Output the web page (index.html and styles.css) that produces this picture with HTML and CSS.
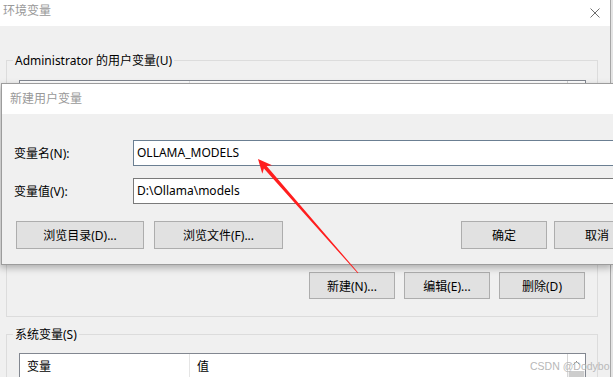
FILE: index.html
```html
<!doctype html>
<html>
	<head>
		<title>环境变量</title>
		<meta charset="utf-8" />
		<link rel="stylesheet" href="styles.css">
	</head>
	<body>
		<div class="window">
			<div class="titlebar">
				<span class="title">环境变量</span>
				<svg class="close" width="10" height="10" viewBox="0 0 10 10"><path d="M0.5 0.5L9.5 9.5M9.5 0.5L0.5 9.5" stroke="#6e6e6e" stroke-width="1" fill="none"/></svg>
			</div>
			<div class="client">
				<div class="group group-user">
					<div class="group-label">Administrator 的用户变量(U)</div>
					<div class="list list-user">
						<div class="list-main">
							<div class="list-head">
								<div class="col-name">变量</div>
								<div class="col-value">值</div>
							</div>
						</div>
						<div class="scroll"><span class="scroll-up"><svg width="7" height="4" viewBox="0 0 7 4"><path d="M0.5 3.5L3.5 0.5L6.5 3.5" stroke="#606060" fill="none"/></svg></span><span class="thumb"></span></div>
					</div>
					<div class="btn-row">
						<button class="btn">新建(N)...</button>
						<button class="btn">编辑(E)...</button>
						<button class="btn">删除(D)</button>
					</div>
				</div>
				<div class="group group-sys">
					<div class="group-label">系统变量(S)</div>
					<div class="list list-sys">
						<div class="list-main">
							<div class="list-head">
								<div class="col-name">变量</div>
								<div class="col-value">值</div>
							</div>
						</div>
						<div class="scroll"><span class="scroll-up"><svg width="7" height="4" viewBox="0 0 7 4"><path d="M0.5 3.5L3.5 0.5L6.5 3.5" stroke="#606060" fill="none"/></svg></span><span class="thumb"></span></div>
					</div>
				</div>
			</div>
		</div>

		<!-- 新建用户变量 对话框 -->
		<div class="dialog">
			<div class="dlg-title">新建用户变量</div>
			<div class="dlg-body">
				<div class="field">
					<label class="field-label">变量名(N):</label>
					<div class="input input-focus">OLLAMA_MODELS</div>
				</div>
				<div class="field field-2">
					<label class="field-label">变量值(V):</label>
					<div class="input">D:\Ollama\models</div>
				</div>
				<div class="dlg-btns">
					<button class="btn btn-dir">浏览目录(D)...</button>
					<button class="btn btn-file">浏览文件(F)...</button>
					<button class="btn btn-ok">确定</button>
					<button class="btn btn-cancel">取消</button>
				</div>
			</div>
		</div>

		<svg class="arrow" width="613" height="377" viewBox="0 0 613 377">
			<polygon points="258,159 272.1,165.2 266.6,166.1 358.3,272.7 357.7,273.3 263.9,168.5 262.3,173.8" fill="#ff1e1e"/>
		</svg>

		<div class="watermark">CSDN @Dodybo</div>
	</body>
</html>
```

FILE: styles.css
```css
*{
	margin:0;
	padding:0;
	box-sizing:border-box;
}

body{
	width:613px;
	height:377px;
	overflow:hidden;
	position:relative;
	background:#e4e4e4;
	font-family:"Noto Sans","Noto Sans CJK SC",sans-serif;
	font-size:12px;
	color:#000;
}

/* 后面的 环境变量 窗口 */
.window{
	width:611px;
	height:377px;
	overflow:hidden;
	background:#f0f0f0;
	border-right:1px solid #a6a6a6;
}

.titlebar{
	height:26px;
	background:#fff;
	display:flex;
	align-items:center;
	padding:0 10px 4px 3px;
}
.title{
	color:#999;
	line-height:16px;
}
.close{
	margin-left:auto;
	margin-top:3px;
}

.client{
	padding-top:34px;
}

.group{
	margin-left:6px;
	width:592px;
	border:1px solid #dcdcdc;
	padding:0 11px 17px 12px;
}
.group-sys{
	margin-top:17px;
}
.group-label{
	width:fit-content;
	margin:-8px 0 0 -6px;
	padding:0 2px;
	line-height:16px;
	background:#f0f0f0;
}

.list{
	display:flex;
	border:1px solid #828790;
	background:#fff;
}
.list-user{
	height:180px;
	margin-top:11px;
}
.list-sys{
	height:30px;
	margin-top:10px;
}
.list-main{
	flex:1;
}
.list-head{
	display:flex;
	height:26px;
	line-height:26px;
	border-right:1px solid #d6d6d6;
}
.col-name{
	width:170px;
	padding-left:7px;
	border-right:1px solid #e5e5e5;
}
.col-value{
	flex:1;
	padding-left:7px;
}
.scroll{
	width:17px;
	display:flex;
	flex-direction:column;
	align-items:center;
	background:#f0f0f0;
}
.scroll-up{
	height:17px;
	width:17px;
	display:flex;
	align-items:center;
	justify-content:center;
	background:#fff;
}
.thumb{
	width:15px;
	height:10px;
	background:#cdcdcd;
}

.btn{
	height:27px;
	width:86px;
	background:#e1e1e1;
	border:1px solid #adadad;
	font-family:inherit;
	font-size:12px;
	color:#000;
}
.btn-row{
	display:flex;
	justify-content:flex-end;
	gap:9px;
	margin-top:12px;
	padding-right:1px;
}

/* 前面的 新建用户变量 对话框 */
.dialog{
	position:absolute;
	left:1px;
	top:83px;
	width:612px;
	overflow:hidden;
	border:1px solid #9c9c9c;
	border-right:none;
	background:#f0f0f0;
	box-shadow:-1px 3px 7px rgba(0,0,0,0.28);
}
.dlg-title{
	height:30px;
	line-height:30px;
	background:#fff;
	padding-left:8px;
	color:#999;
}
.dlg-body{
	padding:26px 0 15px 0;
}
.field{
	display:flex;
	align-items:center;
}
.field-2{
	margin-top:12px;
}
.field-label{
	width:131px;
	flex:none;
	padding-left:12px;
}
.input{
	flex:none;
	width:508px;
	height:26px;
	line-height:24px;
	padding-left:3px;
	background:#fff;
	border:1px solid #7a7a7a;
}
.input-focus{
	border-color:#6b7f92;
}
.dlg-btns{
	display:flex;
	margin-top:17px;
	padding-left:14px;
}
.dlg-btns .btn{
	flex:none;
	height:28px;
}
.btn-dir{
	width:128px;
}
.btn-file{
	width:129px;
	margin-left:10px;
}
.btn-ok{
	margin-left:178px;
}
.btn-cancel{
	margin-left:7px;
}

/* 标注 */
.arrow{
	position:absolute;
	left:0;
	top:0;
}
.watermark{
	position:absolute;
	left:530px;
	top:359px;
	white-space:nowrap;
	font-family:"Liberation Sans",sans-serif;
	font-size:10.5px;
	line-height:14px;
	color:#b8b8b8;
}
```
